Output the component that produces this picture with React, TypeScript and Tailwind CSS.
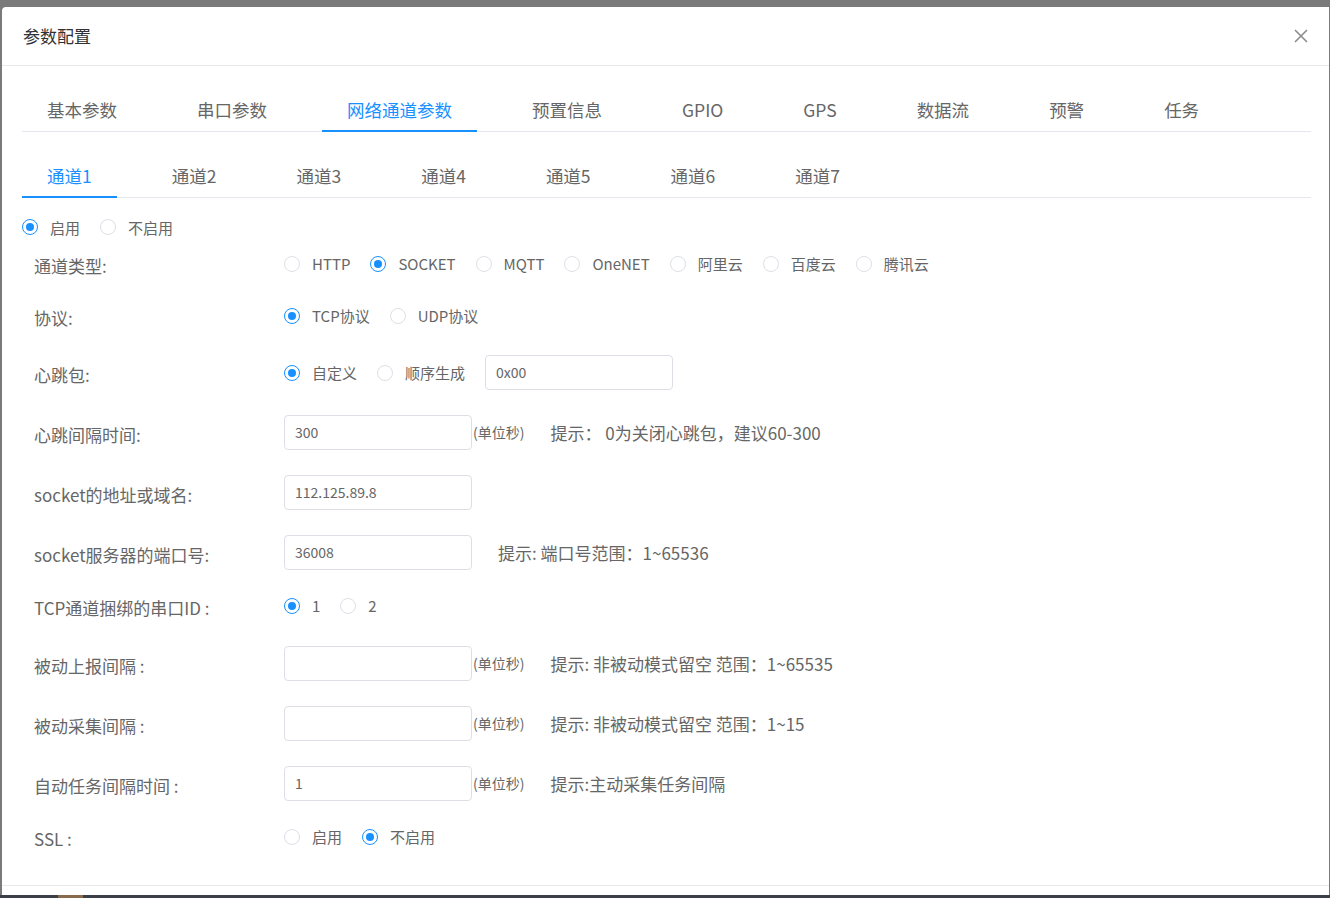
const topTabs = ['基本参数', '串口参数', '网络通道参数', '预置信息', 'GPIO', 'GPS', '数据流', '预警', '任务']
const channelTabs = ['通道1', '通道2', '通道3', '通道4', '通道5', '通道6', '通道7']

function Radio({ label, checked = false }: { label: string; checked?: boolean }) {
  return (
    <label className="flex items-center mr-[20px] cursor-pointer">
      <span
        className={`w-4 h-4 rounded-full border flex items-center justify-center bg-white ${
          checked ? 'border-[#1890ff]' : 'border-[#dcdfe6]'
        }`}
      >
        {checked && <span className="w-2 h-2 rounded-full bg-[#1890ff]"></span>}
      </span>
      <span className="ml-[12px] text-[15px] text-[#666] leading-none">{label}</span>
    </label>
  )
}

function Input({ value = '' }: { value?: string }) {
  return (
    <div className="w-[188px] h-[35px] border border-[#dcdfe6] rounded-[4px] flex items-center px-[10px] text-[14px] text-[#666] bg-white">
      {value}
    </div>
  )
}

function Unit() {
  return <span className="text-[14px] text-[#666] ml-px">(单位秒)</span>
}

function Hint({ children, className = '' }: { children: React.ReactNode; className?: string }) {
  return <span className={`text-[17px] text-[#666] ${className}`}>{children}</span>
}

function Row({ label, className, children }: { label: string; className: string; children: React.ReactNode }) {
  return (
    <div className={`flex items-center h-[35px] ${className}`}>
      <div className="w-[250px] ml-[12px] text-[17px] text-[#666] pt-[5px]">{label}</div>
      <div className="flex items-center">{children}</div>
    </div>
  )
}

function Tabs({ items, active }: { items: string[]; active: number }) {
  return (
    <div className="flex border-b border-[#e4e7ed]">
      {items.map((t, i) => (
        <div
          key={t}
          className={`h-[41px] px-[25px] mr-[30px] -mb-px flex items-center text-[17.5px] border-b-2 ${
            i === active ? 'text-[#1890ff] border-[#1890ff]' : 'text-[#666] border-transparent'
          }`}
        >
          {t}
        </div>
      ))}
    </div>
  )
}

export default function App() {
  return (
    <div className="w-full h-[898px] bg-[#7a7a7a] overflow-hidden flex flex-col font-['Noto_Sans_CJK_SC',sans-serif]">
      <div className="ml-[2px] mt-[7px] w-[1327px] h-[888px] bg-white rounded-tl-[4px] flex flex-col">
        {/* header */}
        <div className="h-[59px] px-[21px] flex items-center justify-between border-b border-[#e8e8e8]">
          <span className="text-[17px] text-[#303133]">参数配置</span>
          <svg width="14" height="14" viewBox="0 0 14 14" className="text-[#8c8c8c]">
            <path d="M1 1L13 13M13 1L1 13" stroke="currentColor" strokeWidth="1.6" fill="none" />
          </svg>
        </div>

        <div className="flex-1 pt-[25px] pl-[20px] pr-[18px]">
          <Tabs items={topTabs} active={2} />
          <div className="mt-[25px]">
            <Tabs items={channelTabs} active={0} />
          </div>

          <div className="flex items-center h-[18px] mt-[20px]">
            <Radio label="启用" checked />
            <Radio label="不启用" />
          </div>

          <Row label="通道类型:" className="mt-[10px]">
            <Radio label="HTTP" />
            <Radio label="SOCKET" checked />
            <Radio label="MQTT" />
            <Radio label="OneNET" />
            <Radio label="阿里云" />
            <Radio label="百度云" />
            <Radio label="腾讯云" />
          </Row>

          <Row label="协议:" className="mt-[17px]">
            <Radio label="TCP协议" checked />
            <Radio label="UDP协议" />
          </Row>

          <Row label="心跳包:" className="mt-[22px]">
            <Radio label="自定义" checked />
            <Radio label="顺序生成" />
            <Input value="0x00" />
          </Row>

          <Row label="心跳间隔时间:" className="mt-[25px]">
            <Input value="300" />
            <Unit />
            <Hint className="ml-[26px]">提示：&nbsp;0为关闭心跳包，建议60-300</Hint>
          </Row>

          <Row label="socket的地址或域名:" className="mt-[25px]">
            <Input value="112.125.89.8" />
          </Row>

          <Row label="socket服务器的端口号:" className="mt-[25px]">
            <Input value="36008" />
            <Hint className="ml-[26px]">提示: 端口号范围：1~65536</Hint>
          </Row>

          <Row label="TCP通道捆绑的串口ID :" className="mt-[18px]">
            <Radio label="1" checked />
            <Radio label="2" />
          </Row>

          <Row label="被动上报间隔 :" className="mt-[23px]">
            <Input />
            <Unit />
            <Hint className="ml-[26px]">提示: 非被动模式留空 范围：1~65535</Hint>
          </Row>

          <Row label="被动采集间隔 :" className="mt-[25px]">
            <Input />
            <Unit />
            <Hint className="ml-[26px]">提示: 非被动模式留空 范围：1~15</Hint>
          </Row>

          <Row label="自动任务间隔时间 :" className="mt-[25px]">
            <Input value="1" />
            <Unit />
            <Hint className="ml-[26px]">提示:主动采集任务间隔</Hint>
          </Row>

          <Row label="SSL :" className="mt-[18px]">
            <Radio label="启用" />
            <Radio label="不启用" checked />
          </Row>
        </div>

        <div className="h-[10px] border-t border-[#e8e8e8]"></div>
      </div>
      <div className="flex-1 bg-[#3b4046] flex">
        <div className="ml-[58px] w-[25px] bg-[#8a6a4c]"></div>
      </div>
    </div>
  )
}
